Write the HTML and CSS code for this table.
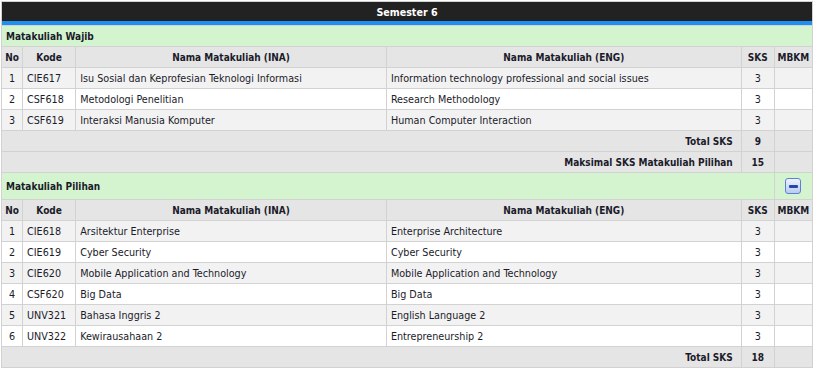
FILE: index.html
```html
<!DOCTYPE html>
<html>
<head>
<meta charset="utf-8">
<link rel="stylesheet" href="styles.css">
</head>
<body>
<table class="krs">
  <colgroup>
    <col class="c-no"><col class="c-kode"><col class="c-ina"><col class="c-eng"><col class="c-sks"><col class="c-mbkm">
  </colgroup>
  <tr><th class="title" colspan="6">Semester 6</th></tr>
  <tr class="group"><td colspan="6">Matakuliah Wajib</td></tr>
  <tr class="head"><th>No</th><th>Kode</th><th>Nama Matakuliah (INA)</th><th>Nama Matakuliah (ENG)</th><th>SKS</th><th>MBKM</th></tr>
  <tr class="odd"><td class="ctr">1</td><td>CIE617</td><td>Isu Sosial dan Keprofesian Teknologi Informasi</td><td>Information technology professional and social issues</td><td class="ctr">3</td><td></td></tr>
  <tr class="even"><td class="ctr">2</td><td>CSF618</td><td>Metodologi Penelitian</td><td>Research Methodology</td><td class="ctr">3</td><td></td></tr>
  <tr class="odd"><td class="ctr">3</td><td>CSF619</td><td>Interaksi Manusia Komputer</td><td>Human Computer Interaction</td><td class="ctr">3</td><td></td></tr>
  <tr class="total"><td colspan="4" class="rt">Total SKS</td><td class="ctr">9</td><td></td></tr>
  <tr class="total"><td colspan="4" class="rt">Maksimal SKS Matakuliah Pilihan</td><td class="ctr">15</td><td></td></tr>
  <tr class="group tall"><td colspan="5">Matakuliah Pilihan</td><td class="ctr"><span class="minus"><span></span></span></td></tr>
  <tr class="head"><th>No</th><th>Kode</th><th>Nama Matakuliah (INA)</th><th>Nama Matakuliah (ENG)</th><th>SKS</th><th>MBKM</th></tr>
  <tr class="odd"><td class="ctr">1</td><td>CIE618</td><td>Arsitektur Enterprise</td><td>Enterprise Architecture</td><td class="ctr">3</td><td></td></tr>
  <tr class="even"><td class="ctr">2</td><td>CIE619</td><td>Cyber Security</td><td>Cyber Security</td><td class="ctr">3</td><td></td></tr>
  <tr class="odd"><td class="ctr">3</td><td>CIE620</td><td>Mobile Application and Technology</td><td>Mobile Application and Technology</td><td class="ctr">3</td><td></td></tr>
  <tr class="even"><td class="ctr">4</td><td>CSF620</td><td>Big Data</td><td>Big Data</td><td class="ctr">3</td><td></td></tr>
  <tr class="odd"><td class="ctr">5</td><td>UNV321</td><td>Bahasa Inggris 2</td><td>English Language 2</td><td class="ctr">3</td><td></td></tr>
  <tr class="even"><td class="ctr">6</td><td>UNV322</td><td>Kewirausahaan 2</td><td>Entrepreneurship 2</td><td class="ctr">3</td><td></td></tr>
  <tr class="total"><td colspan="4" class="rt">Total SKS</td><td class="ctr">18</td><td></td></tr>
</table>
</body>
</html>
```
FILE: styles.css
```css
html, body {
  margin: 0;
  padding: 0;
  background: #ffffff;
}
body {
  padding: 1px 0 0 1px;
  font-family: "DejaVu Sans Condensed", "DejaVu Sans", sans-serif;
  font-size: 10.7px;
  color: #1b1b2a;
}
.krs {
  width: 812px;
  table-layout: fixed;
  border-collapse: separate;
  border-spacing: 1px;
  background: #d2d2d2;
}
.c-no { width: 20px; }
.c-kode { width: 52px; }
.c-ina { width: 309px; }
.c-eng { width: 353px; }
.c-sks { width: 32px; }
.c-mbkm { width: 37px; }
.krs td, .krs th {
  padding: 0 4px;
  height: 20px;
  white-space: nowrap;
}
.krs td.ctr, .krs th { padding: 0 1px; }
.krs th.title {
  background: #222222;
  color: #ffffff;
  font-size: 10.6px;
  height: 19px;
  padding: 0;
  border-bottom: 4px solid #1e90f0;
  text-align: center;
}
.group td {
  background: #d3f4cf;
  font-weight: bold;
  font-size: 10px;
}
.group.tall td { height: 26px; }
.head th {
  background: #e5e5e5;
  font-weight: bold;
  font-size: 10px;
  text-align: center;
}
.odd td { background: #f2f2f2; }
.even td { background: #ffffff; }
.total td {
  background: #e5e5e5;
  font-weight: bold;
  font-size: 10px;
}
.ctr { text-align: center; }
.krs td.rt { text-align: right; padding-right: 8px; }
.minus {
  display: inline-flex;
  align-items: center;
  justify-content: center;
  width: 14px;
  height: 14px;
  border: 1px solid #5f7fd6;
  border-radius: 3px;
  background: linear-gradient(#eef3fd, #b9cbf1);
  vertical-align: middle;
}
.minus span {
  display: block;
  width: 9px;
  height: 3px;
  background: #2646a8;
  border-radius: 1px;
}
```
